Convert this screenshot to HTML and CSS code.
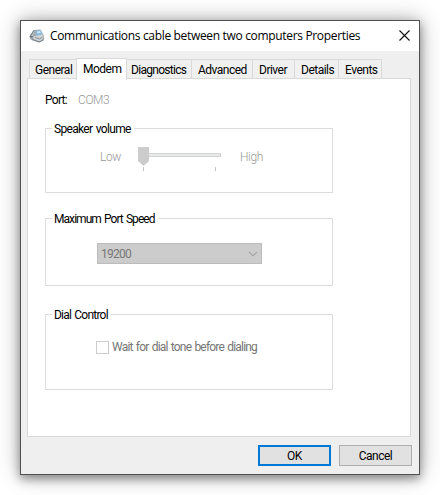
FILE: index.html
```html
<!DOCTYPE html>
<html lang="en">
<head>
<meta charset="utf-8">
<title>Communications cable between two computers Properties</title>
<link rel="stylesheet" href="styles.css">
</head>
<body>
<main class="window">
  <header class="titlebar">
    <svg class="device" width="16" height="16" viewBox="0 0 16 16">
      <path d="M.5 8.500 4.500 2l7-.5 3.500 6.500v4l-5 2.500-8.500-3z" fill="#a3abb0"/>
      <path d="m.5 8.500 4-6 1.500.5-2.500 6-1 1z" fill="#707a81"/>
      <path d="m2 8 3-5 1 .3L4 8z" fill="#b9c0c5"/>
      <path d="m6.500 3 5-1 2 4.500-6 1.500z" fill="#8cb9dc"/>
      <path d="m8 3.500 3-.6 1 1.700-3.500 1z" fill="#cfe9f9"/>
      <path d="m4.500 8.500 8.500-2 1.500 2-1.500 3.500-3 1.200L4.500 11z" fill="#ced3d6"/>
      <path d="m6 9.500 4.500 1.500 3-2" fill="none" stroke="#6f777d" stroke-width=".7"/>
      <path d="m3 11.500 7 2.500 4.500-2" fill="none" stroke="#687178" stroke-width=".7"/>
    </svg>
    <h1 class="title">Communications cable between two computers Properties</h1>
    <svg class="close" width="11" height="11" viewBox="0 0 11 11"><path d="m.5.5 10 10m0-10-10 10" fill="none" stroke="#111" stroke-width="1.100"/></svg>
  </header>
  <nav class="tabs">
    <div class="tab general"><span>General</span></div>
    <div class="tab modem"><span>Modem</span></div>
    <div class="tab diagnostics"><span>Diagnostics</span></div>
    <div class="tab advanced"><span>Advanced</span></div>
    <div class="tab driver"><span>Driver</span></div>
    <div class="tab details"><span>Details</span></div>
    <div class="tab events"><span>Events</span></div>
  </nav>
  <section class="pane">
    <div class="port"><span class="port-label">Port:</span><span class="muted">COM3</span></div>
    <section class="group speaker">
      <h2 class="legend l-speaker">Speaker volume</h2>
      <div class="volume">
        <span class="muted low">Low</span>
        <svg class="slider" width="84" height="26" viewBox="0 0 84 26">
          <rect x="1.500" y="6.500" width="81" height="3" fill="#e7eaea" stroke="#d2d2d2"/>
          <path d="M0 0h11v14l-5.500 5L0 14z" fill="#ccc"/>
          <path d="M5.500 20v4m72-4v4" stroke="#c4c4c4"/>
        </svg>
        <span class="muted high">High</span>
      </div>
    </section>
    <section class="group speed">
      <h2 class="legend l-speed">Maximum Port Speed</h2>
      <div class="combo"><span>19200</span><svg width="10" height="6" viewBox="0 0 10 6"><path d="m1 .8 4 4 4-4" fill="none" stroke="#a0a0a0" stroke-width="1.100"/></svg></div>
    </section>
    <section class="group dial">
      <h2 class="legend l-dial">Dial Control</h2>
      <div class="check"><i class="box"></i><span>Wait for dial tone before dialing</span></div>
    </section>
  </section>
  <footer class="buttons">
    <button class="btn ok"><span>OK</span></button>
    <button class="btn cancel"><span>Cancel</span></button>
  </footer>
</main>
</body>
</html>
```
FILE: styles.css
```css
* { box-sizing: border-box; }
body { margin: 0; padding: 20px; height: 495px; overflow: hidden; background: #fff; color: #000; font: 12px/14px Roboto, "Liberation Sans", sans-serif; letter-spacing: -.5px; }
.window { width: 400px; height: 455px; border: 1px solid #505050; background: #efefef; box-shadow: 0 0 20px rgba(0,0,0,.34), 0 4px 9px rgba(0,0,0,.34); }
.titlebar { height: 30px; background: #fff; display: flex; align-items: center; padding: 0 9px 2px 8px; }
.device { flex: none; margin-top: 2px; }
.title { margin: 2px 0 0 5px; font: 12px/16px "Open Sans", "Noto Sans", sans-serif; letter-spacing: -.33px; white-space: nowrap; }
.close { margin-left: auto; flex: none; }
.tabs { display: flex; align-items: flex-end; height: 28px; padding-left: 8px; position: relative; z-index: 1; }
.tab { height: 19px; border: 1px solid #d9d9d9; border-bottom: 0; border-left: 0; background: #f0f0f0; padding: 3px 0 0 5px; margin-bottom: 1px; white-space: nowrap; }
.general { width: 47px; border-left: 1px solid #d9d9d9; border-right: 0; }
.modem { width: 51px; height: 22px; background: #fff; border-left: 1px solid #d9d9d9; padding: 3px 0 0 6px; margin-bottom: -1px; }
.diagnostics { width: 65px; padding-left: 4px; letter-spacing: -.7px; }
.advanced { width: 61px; padding-left: 6px; }
.driver { width: 42px; padding-left: 6px; }
.details { width: 44px; padding-left: 6px; }
.events { width: 43px; padding-left: 6px; }
.pane { width: 384px; height: 359px; margin: -1px 0 0 6px; border: 1px solid #d9d9d9; background: #fff; padding: 14px 0 0 17px; }
.port { display: flex; height: 35px; }
.port-label { width: 33px; letter-spacing: -.7px; }
.muted { color: #999; font-weight: 300; letter-spacing: -.4px; }
.group { width: 288px; border: 1px solid #dcdcdc; }
.speaker { height: 65px; }
.speed { height: 68px; margin-top: 25px; }
.dial { height: 76px; margin-top: 28px; }
.legend { width: max-content; margin: -7px 0 0 6px; padding: 0 3px 0 2px; background: #fff; font-size: inherit; font-weight: 400; line-height: 14px; white-space: nowrap; word-spacing: 1px; }
.l-speaker { letter-spacing: -.67px; }
.l-speed { letter-spacing: -.94px; }
.l-dial { letter-spacing: -.78px; }
.volume { display: flex; height: 26px; margin: 11px 0 0 54px; }
.low { width: 38px; padding-top: 3px; }
.high { padding: 3px 0 0 18px; }
.combo { width: 165px; height: 21px; margin: 17px 0 0 51px; border: 1px solid #bcbcbc; background: #ccc; color: #777; display: flex; justify-content: space-between; align-items: center; padding: 0 3px; letter-spacing: -.75px; }
.check { display: flex; align-items: center; height: 14px; margin: 18px 0 0 50px; color: #757575; letter-spacing: -.8px; word-spacing: 1px; }
.box { width: 13px; height: 13px; border: 1px solid #ccc; margin-right: 3px; }
.buttons { display: flex; justify-content: flex-end; gap: 8px; margin-top: 8px; padding-right: 7px; }
.btn { width: 73px; height: 21px; padding: 0; border: 1px solid #adadad; background: #e1e1e1; color: #000; font: inherit; letter-spacing: inherit; }
.ok { border: 2px solid #0078d7; }
```
